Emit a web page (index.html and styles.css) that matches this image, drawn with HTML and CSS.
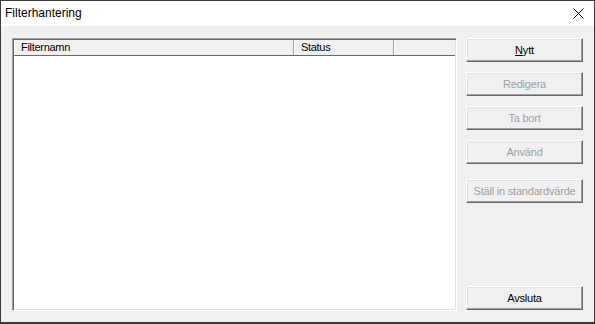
FILE: index.html
```html
<!DOCTYPE html>
<html lang="sv">

<head>
    <meta charset="UTF-8">
    <title>Filterhantering</title>
    <link rel="stylesheet" href="styles.css">
</head>

<body>
    <div class="window">
        <!--titel-->
        <div class="titlebar">
            <span class="title">Filterhantering</span>
            <span class="close">
                <svg width="11" height="11" viewBox="0 0 11 11">
                    <path d="M0.5 0.5 L10.5 10.5 M10.5 0.5 L0.5 10.5" stroke="#000" stroke-width="1" fill="none"/>
                </svg>
            </span>
        </div>
        <!--innehåll-->
        <div class="content">
            <div class="list">
                <div class="header">
                    <div class="col col-name">Filternamn</div>
                    <div class="col col-status">Status</div>
                    <div class="col col-rest"></div>
                </div>
                <div class="rows"></div>
            </div>
            <div class="buttons">
                <button class="btn"><u>N</u>ytt</button>
                <button class="btn" disabled>Redigera</button>
                <button class="btn" disabled>Ta bort</button>
                <button class="btn" disabled>Använd</button>
                <button class="btn btn-default" disabled>Ställ in standardvärde</button>
                <button class="btn btn-close">Avsluta</button>
            </div>
        </div>
    </div>
</body>

</html>
```

FILE: styles.css
```css
html,
body {
    margin: 0;
    padding: 0;
    width: 595px;
    height: 324px;
    overflow: hidden;
}

.window {
    box-sizing: border-box;
    width: 595px;
    height: 324px;
    border: 1px solid #3a3a3a;
    border-bottom-width: 2px;
    background: #f0f0f0;
    display: flex;
    flex-direction: column;
    font-family: "Liberation Sans", Arial, sans-serif;
    color: #000;
}

/*titel*/
.titlebar {
    height: 25px;
    background: #fff;
    display: flex;
    align-items: center;
    justify-content: space-between;
    padding: 0 10px 0 4px;
}

.title {
    font-size: 12px;
    line-height: 25px;
}

.close {
    display: flex;
    margin-top: -1px;
}

/*innehåll*/
.content {
    flex: 1;
    display: flex;
    gap: 9px;
    padding: 12px 11px 11px 11px;
}

.list {
    flex: 1;
    display: flex;
    flex-direction: column;
    background: #fff;
    border: 1px solid;
    border-color: #a0a0a0 #fff #fff #a0a0a0;
    box-shadow: inset 1px 1px #696969, inset -1px -1px #e3e3e3;
    padding: 1px;
}

.header {
    display: flex;
    height: 15px;
    background: #f0f0f0;
    border-bottom: 1px solid #696969;
    font-size: 11px;
    letter-spacing: -0.3px;
}

.col {
    box-sizing: border-box;
    line-height: 15px;
    padding-left: 6px;
    border-left: 1px solid #fff;
    border-right: 1px solid #a0a0a0;
}

.col-name {
    width: 280px;
}

.col-status {
    width: 100px;
}

.col-rest {
    flex: 1;
    border-right: none;
}

.rows {
    flex: 1;
}

/*knappar*/
.buttons {
    width: 117px;
    display: flex;
    flex-direction: column;
    gap: 10px;
}

.btn {
    box-sizing: border-box;
    height: 24px;
    margin: 0;
    padding: 0;
    background: #f0f0f0;
    border: 1px solid;
    border-color: #fff #696969 #696969 #fff;
    box-shadow: inset -1px -1px #a0a0a0, inset 1px 1px #e3e3e3;
    border-radius: 0;
    font-family: "Liberation Sans", Arial, sans-serif;
    font-size: 11px;
    font-weight: normal;
    letter-spacing: -0.2px;
    color: #000;
}

.btn:disabled {
    color: #a0a0a0;
}

.btn-default {
    margin-top: 5px;
}

.btn-close {
    margin-top: auto;
    margin-bottom: 1px;
}
```
